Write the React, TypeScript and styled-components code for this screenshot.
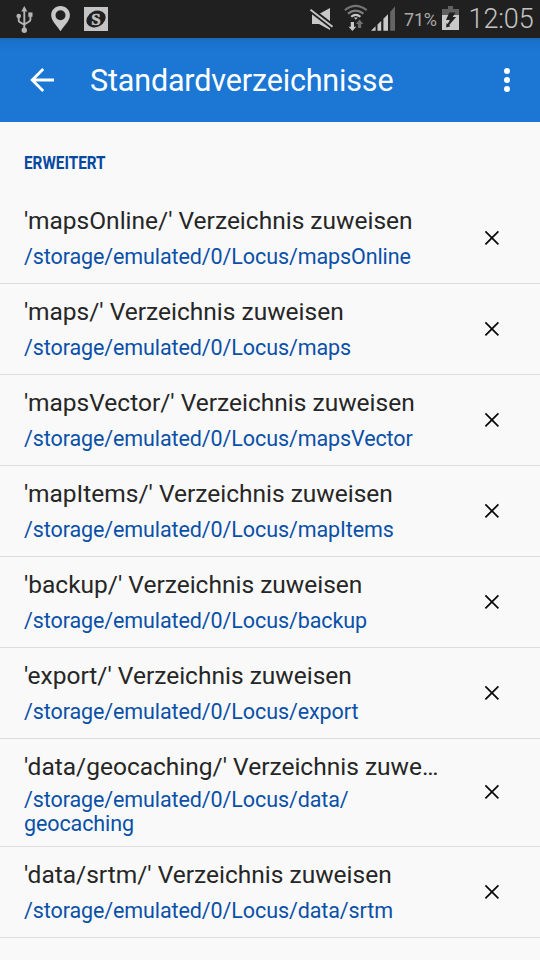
import React from "react";
import styled, { createGlobalStyle } from "styled-components";

const GlobalStyle = createGlobalStyle`
  html, body { margin: 0; padding: 0; background: #f9f9f9; }
  body { width: 540px; height: 960px; overflow: hidden; font-family: Roboto, "Liberation Sans", sans-serif; }
  * { box-sizing: border-box; }
  svg { display: block; flex: none; }
`;

const Screen = styled.div`
  width: 540px;
  height: 960px;
  display: flex;
  flex-direction: column;
  background: #f9f9f9;
  overflow: hidden;
`;

const StatusBar = styled.header`
  height: 38px;
  flex: none;
  display: flex;
  align-items: center;
  justify-content: space-between;
  padding: 0 8px 0 16px;
  background: #202020;
  color: #c4c4c4;
`;

const StatusGroup = styled.div`
  display: flex;
  align-items: center;
`;

const StatusIcon = styled.span<{ $after: number }>`
  margin-right: ${({ $after }) => $after}px;
`;

const BatteryLevel = styled.span`
  width: 32px;
  margin: 2px 6px 0 9px;
  font-size: 18px;
  line-height: 24px;
  letter-spacing: -0.2px;
  white-space: nowrap;
  color: #aaa;
`;

const Clock = styled.span`
  width: 64px;
  font-size: 27px;
  line-height: 36px;
  font-weight: 300;
  letter-spacing: -0.1px;
  text-indent: 0.5px;
  white-space: nowrap;
`;

const AppBar = styled.nav`
  height: 84px;
  flex: none;
  display: flex;
  align-items: center;
  padding: 0 30px;
  background: linear-gradient(#1a66b5 0, #1b71c8 3px, #1b74d0 8px, #1b76d4 14px);
  color: #fff;
`;

const IconButton = styled.button`
  display: flex;
  align-items: center;
  justify-content: center;
  padding: 0;
  border: 0;
  background: none;
  color: inherit;
`;

const PageTitle = styled.h1`
  flex: 1;
  margin: 1px 0 0 36px;
  font-size: 30.5px;
  line-height: 40px;
  font-weight: 400;
  letter-spacing: -0.16px;
`;

const SectionTitle = styled.h2`
  height: 71px;
  flex: none;
  margin: 0;
  padding: 30px 24px 0;
  font-size: 18px;
  line-height: 22px;
  font-weight: 700;
  color: #0748a0;
  transform: scaleX(0.85);
  transform-origin: 24px 0;
`;

const List = styled.ul`
  margin: 0;
  padding: 0;
  list-style: none;
`;

const Row = styled.li<{ $tall?: boolean }>`
  height: ${({ $tall }) => ($tall ? 108 : 91)}px;
  display: flex;
  align-items: center;
  justify-content: space-between;
  padding: 0 40px 0 24px;
  border-bottom: 1px solid #dcdcdc;
  color: #080808;
`;

const RowText = styled.div`
  width: 420px;
  height: 100%;
  padding-top: 12px;
`;

const RowTitle = styled.div`
  font-size: 24.5px;
  line-height: 32px;
  letter-spacing: 0;
  color: #262626;
  white-space: nowrap;
`;

const RowPath = styled.div<{ $wrapped?: boolean }>`
  margin-top: ${({ $wrapped }) => ($wrapped ? 5 : 8)}px;
  font-size: 21.5px;
  line-height: 24px;
  letter-spacing: -0.1px;
  color: #0a50a8;
  white-space: pre-line;
`;

const RemoveButton = styled(IconButton)<{ $tall?: boolean }>`
  padding-bottom: ${({ $tall }) => ($tall ? 1 : 0)}px;
`;

const items = [
  { title: "'mapsOnline/' Verzeichnis zuweisen", path: "/storage/emulated/0/Locus/mapsOnline" },
  { title: "'maps/' Verzeichnis zuweisen", path: "/storage/emulated/0/Locus/maps" },
  { title: "'mapsVector/' Verzeichnis zuweisen", path: "/storage/emulated/0/Locus/mapsVector" },
  { title: "'mapItems/' Verzeichnis zuweisen", path: "/storage/emulated/0/Locus/mapItems" },
  { title: "'backup/' Verzeichnis zuweisen", path: "/storage/emulated/0/Locus/backup" },
  { title: "'export/' Verzeichnis zuweisen", path: "/storage/emulated/0/Locus/export" },
  { title: "'data/geocaching/' Verzeichnis zuwe…", path: "/storage/emulated/0/Locus/data/\ngeocaching", tall: true },
  { title: "'data/srtm/' Verzeichnis zuweisen", path: "/storage/emulated/0/Locus/data/srtm" },
];

const UsbIcon = () => (
  <svg width="17" height="38" viewBox="0 0 17 38" fill="#b4b4b4">
    <path d="M8.3 6l3 5.5h-6z" />
    <circle cx="8.3" cy="30.3" r="2.7" />
    <rect x="12.3" y="12.4" width="4.2" height="4.4" />
    <circle cx="2.7" cy="16" r="2.3" />
    <path d="M8.3 10v19M2.7 16v4.2q0 1.4 1.2 2l4.4 2.6M14.4 15v4.6q0 1.3-1.2 1.9l-4.9 3" fill="none" stroke="#b4b4b4" strokeWidth="1.9" />
  </svg>
);

const PinIcon = () => (
  <svg width="20" height="38" viewBox="0 0 20 38">
    <path fillRule="evenodd" fill="#c8c8c8" d="M9.5 6C4.3 6 .2 10 .2 15c0 5.5 4.6 9.5 9.3 16.2C14.3 24.5 18.9 20.5 18.9 15c0-5-4.1-9-9.4-9zm0 4.2a5 5 0 1 1 0 10 5 5 0 0 1 0-10z" />
  </svg>
);

const SBadgeIcon = () => (
  <svg width="24" height="38" viewBox="0 0 24 38">
    <rect y="7" width="24" height="24" fill="#c4c4c4" />
    <ellipse cx="12" cy="19" rx="10" ry="7.9" transform="rotate(-28 12 19)" fill="#202020" />
    <text x="12" y="24.6" textAnchor="middle" fontFamily="Liberation Serif, serif" fontWeight="700" fontSize="17" fill="#c4c4c4" stroke="#c4c4c4" strokeWidth="0.5">S</text>
  </svg>
);

const MuteIcon = () => (
  <svg width="24" height="38" viewBox="0 0 24 38">
    <path d="M2 14h7l11-6v22L9 24H2z" fill="#c8c8c8" />
    <path d="M-1 8.5l25 19.3" stroke="#202020" strokeWidth="5.6" />
    <path d="M.5 9.7l22 17" stroke="#c8c8c8" strokeWidth="1.9" />
  </svg>
);

const WifiIcon = () => (
  <svg width="24" height="38" viewBox="0 0 24 38" fill="none">
    <path d="M.8 10.2Q11.5 1.5 22.7 10.2" stroke="#747474" strokeWidth="2.1" />
    <path d="M4 13.6q7.5-6 15.4 0" stroke="#808080" strokeWidth="2.1" />
    <path d="M7.2 16.8q4.5-3.8 9.2 0" stroke="#c8c8c8" strokeWidth="2.1" />
    <path d="M9.8 17.5h4l-2 2.2z" fill="#c8c8c8" />
    <path d="M6.8 22h3.2v4.8h2.2L8.4 31l-3.8-4.2h2.2z" fill="#c8c8c8" />
    <path d="M15.6 19.5l-3.8 4.4h2.2v4h3.2v-4h2.2z" fill="#6e6e6e" />
  </svg>
);

const SignalIcon = () => (
  <svg width="24" height="38" viewBox="0 0 24 38">
    <path d="M0 30.7h4.6V26.3zM6.5 30.7h3.7V21L6.5 24.6zM12.400 30.7H17V14.3l-4.6 4.5z" fill="#c8c8c8" />
    <path d="M19.2 30.7H24V6.3l-4.8 5.6z" fill="#646464" />
  </svg>
);

const BatteryIcon = () => (
  <svg width="17" height="38" viewBox="0 0 17 38">
    <path d="M6 6h5v3h6v6H0V9h6z" fill="#606060" />
    <path d="M0 15h17v15H0z" fill="#c8c8c8" />
    <path d="M7.3 12.6h6.2L10.7 17h3.4L7.2 25l1.2 1.2-4.2 1.4.3-4.6 1.1 1.1L8 20H4z" fill="#202020" />
  </svg>
);

const BackIcon = () => (
  <svg width="24" height="24" viewBox="0 0 24 24" fill="none" stroke="#fff" strokeWidth="2.8">
    <path d="M24 12H2.2M13.2 1L2.2 12l11 11" />
  </svg>
);

const MenuIcon = () => (
  <svg width="6" height="24" viewBox="0 0 6 24" fill="#fff">
    <circle cx="3" cy="3" r="3" />
    <circle cx="3" cy="12" r="3" />
    <circle cx="3" cy="21" r="3" />
  </svg>
);

const RemoveIcon = () => (
  <svg width="16" height="16" viewBox="0 0 16 16" fill="none" stroke="currentColor" strokeWidth="1.7">
    <path d="M1.4 1.4l13 13M14.4 1.4l-13 13" />
  </svg>
);

export default function App() {
  return (
    <Screen>
      <GlobalStyle />
      <StatusBar>
        <StatusGroup>
          <StatusIcon $after={18}><UsbIcon /></StatusIcon>
          <StatusIcon $after={13}><PinIcon /></StatusIcon>
          <StatusIcon $after={0}><SBadgeIcon /></StatusIcon>
        </StatusGroup>
        <StatusGroup>
          <StatusIcon $after={10}><MuteIcon /></StatusIcon>
          <StatusIcon $after={3}><WifiIcon /></StatusIcon>
          <SignalIcon />
          <BatteryLevel>71%</BatteryLevel>
          <StatusIcon $after={9}><BatteryIcon /></StatusIcon>
          <Clock>12:05</Clock>
        </StatusGroup>
      </StatusBar>
      <AppBar>
        <IconButton aria-label="Zurück">
          <BackIcon />
        </IconButton>
        <PageTitle>Standardverzeichnisse</PageTitle>
        <IconButton aria-label="Menü">
          <MenuIcon />
        </IconButton>
      </AppBar>
      <SectionTitle>ERWEITERT</SectionTitle>
      <List>
        {items.map((item) => (
          <Row key={item.path} $tall={item.tall}>
            <RowText>
              <RowTitle>{item.title}</RowTitle>
              <RowPath $wrapped={item.tall}>{item.path}</RowPath>
            </RowText>
            <RemoveButton $tall={item.tall} aria-label="Entfernen">
              <RemoveIcon />
            </RemoveButton>
          </Row>
        ))}
      </List>
    </Screen>
  );
}
